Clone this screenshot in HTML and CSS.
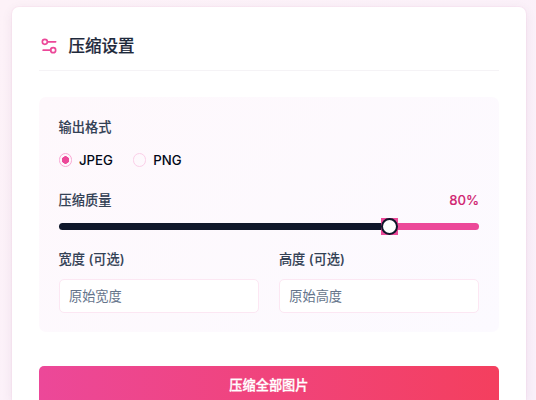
FILE: index.html
```html
<!DOCTYPE html>
<html lang="zh-CN">
<head>
    <meta charset="UTF-8">
    <meta name="viewport" content="width=device-width, initial-scale=1.0">
    <title>压缩设置</title>
    <link rel="stylesheet" href="styles.css">
</head>
<body>
    <div class="card">
        <div class="card-header">
            <svg class="icon" viewBox="0 0 24 24" fill="none" stroke="currentColor" stroke-width="2" stroke-linecap="round" stroke-linejoin="round">
                <path d="M20 7h-9"/>
                <path d="M14 17H5"/>
                <circle cx="17" cy="17" r="3"/>
                <circle cx="7" cy="7" r="3"/>
            </svg>
            <h2>压缩设置</h2>
        </div>

        <div class="panel">
            <div class="label">输出格式</div>
            <div class="radio-group">
                <label class="radio"><input type="radio" name="format" checked>JPEG</label>
                <label class="radio"><input type="radio" name="format">PNG</label>
            </div>

            <div class="quality">
                <span class="label">压缩质量</span>
                <span class="value">80%</span>
            </div>
            <div class="slider">
                <div class="range"></div>
                <div class="thumb-box"><div class="thumb"></div></div>
                <div class="rest"></div>
            </div>

            <div class="sizes">
                <div class="field">
                    <label class="label" for="width">宽度 (可选)</label>
                    <input type="text" id="width" placeholder="原始宽度">
                </div>
                <div class="field">
                    <label class="label" for="height">高度 (可选)</label>
                    <input type="text" id="height" placeholder="原始高度">
                </div>
            </div>
        </div>

        <button type="button">压缩全部图片</button>
    </div>
</body>
</html>
```

FILE: styles.css
```css
* {
    box-sizing: border-box;
}

body {
    font-family: Inter, 'Noto Sans CJK SC', sans-serif;
    font-size: 13.2px;
    line-height: 20px;
    font-weight: 500;
    color: #0f172a;
    margin: 0;
    padding: 7px 9.8px 0 11.6px;
    height: 400px;
    overflow: hidden;
    background: linear-gradient(135deg, #fdf2f8, #faf0fa);
}

.card {
    height: 393px;
    padding: 27px 27px 0;
    background: #fff;
    border-radius: 7px 7px 0 0;
    box-shadow: 0 0 0 1px rgba(236, 72, 153, 0.04), 0 3px 12px rgba(80, 20, 80, 0.08);
}

.card-header {
    display: flex;
    align-items: center;
    gap: 10px;
    height: 37px;
    padding-bottom: 13px;
    margin-bottom: 26px;
    border-bottom: 1px solid #f5f3f6;
}

.icon {
    width: 20px;
    height: 20px;
    color: #ec4899;
}

h2 {
    margin: 0;
    padding-top: 1px;
    font-size: 16.5px;
    line-height: 23px;
    font-weight: 500;
    color: #1e293b;
    -webkit-text-stroke: 0.2px;
}

.panel {
    height: 235px;
    padding: 20px;
    border-radius: 7px;
    background: linear-gradient(135deg, #fef8fc, #fcfaff);
}

.label {
    display: block;
    color: #334155;
    -webkit-text-stroke: 0.1px;
}

.radio-group {
    display: flex;
    gap: 20px;
    margin: 13px 0 20px;
    color: #020817;
}

.radio {
    display: flex;
    align-items: center;
    gap: 7px;
}

.radio input {
    appearance: none;
    width: 13.4px;
    height: 13.4px;
    margin: 0;
    border: 1px solid #fbcfe8;
    border-radius: 50%;
}

.radio input:checked {
    background: radial-gradient(circle, #ec4899 3.5px, transparent 4px);
    border-color: #f9a8d4;
}

.quality {
    display: flex;
    justify-content: space-between;
}

.value {
    color: #d02672;
    -webkit-text-stroke: 0.1px;
}

.slider {
    display: flex;
    align-items: center;
    margin: 8px 0 14px;
}

.range {
    width: 322.4px;
    height: 7px;
    background: #0f172a;
    border-radius: 4px 0 0 4px;
}

.thumb-box {
    width: 17px;
    height: 17px;
    background: #ec4899;
}

.thumb {
    width: 17px;
    height: 17px;
    border: 2px solid #0f172a;
    border-radius: 50%;
    background: #fff;
}

.rest {
    flex: 1;
    height: 7px;
    background: #ec4899;
    border-radius: 0 4px 4px 0;
}

.sizes {
    display: grid;
    grid-template-columns: 1fr 1fr;
    gap: 20px;
}

.field input {
    display: block;
    width: 100%;
    height: 34px;
    margin-top: 10px;
    padding: 0 9.4px;
    border: 1px solid #fce7f3;
    border-radius: 5px;
    background: #fff;
    font: inherit;
    font-weight: 400;
}

.field input::placeholder {
    color: #64748b;
}

button {
    display: block;
    width: 100%;
    height: 34px;
    margin-top: 34px;
    padding: 4px 0 0;
    border: none;
    border-radius: 5px 5px 0 0;
    background: linear-gradient(90deg, #ec4899, #f43f5e);
    color: #fff;
    font: inherit;
    -webkit-text-stroke: 0.3px;
}
```
